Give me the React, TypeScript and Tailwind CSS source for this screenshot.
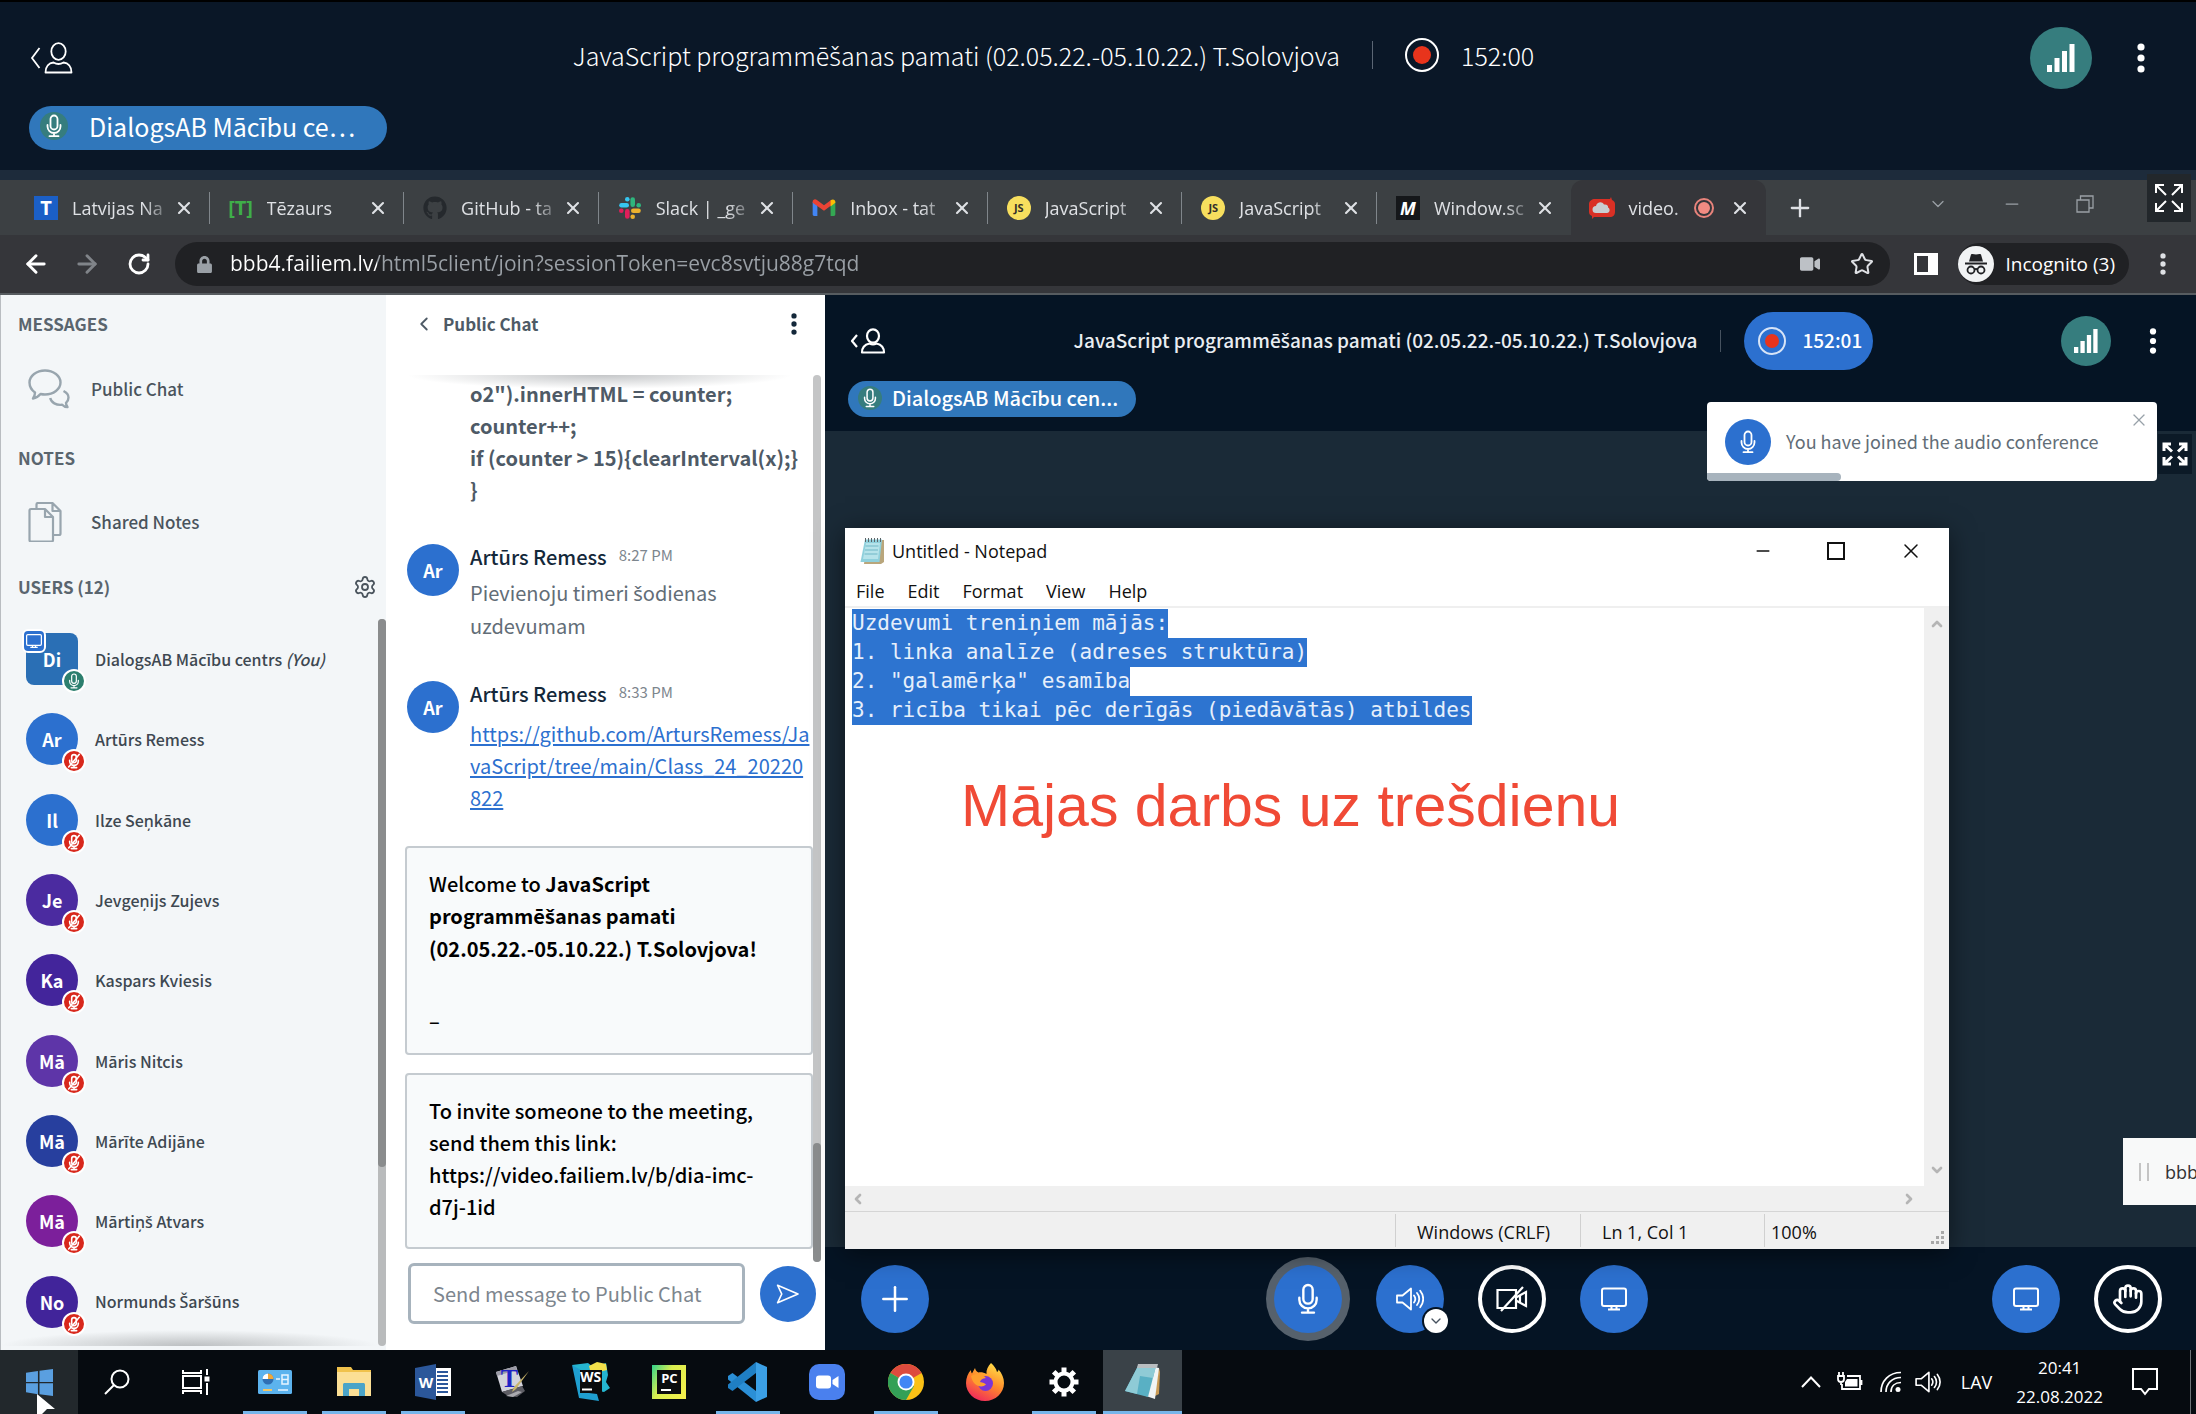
import React from "react";
import { ArrowLeft, ArrowRight, RotateCw, Star, X, Plus, Minus, ChevronLeft, ChevronDown, Hand, Settings } from "lucide-react";
import { FaGithub, FaLock, FaVideo } from "react-icons/fa";

type IconProps = { className?: string };

/* Letters with a caron come from Noto Sans, which carries them precomposed. */
const Text = ({ children }: { children: string }) => (
  <>
    {children.split(/([šŠ])/).map((part, i) =>
      i % 2 ? <span key={i} className="font-['Noto_Sans',sans-serif]">{part}</span> : part,
    )}
  </>
);

/* ---------- shared icons ---------- */

const UserToggleIcon = ({ className }: IconProps) => (
  <svg viewBox="0 0 42 32" className={className} fill="none" stroke="currentColor" strokeWidth="1.800">
    <path d="M9 6 1.500 16 9 26" />
    <ellipse cx="28" cy="9.500" rx="7.200" ry="8.300" />
    <path d="M15 30.500c0-6 3.500-9.500 8-10 3 1.800 7 1.800 10 0 4.500.500 8 4 8 10z" strokeLinejoin="round" />
  </svg>
);

const UserToggleBoldIcon = ({ className }: IconProps) => (
  <svg viewBox="0 0 36 26" className={className} fill="none" stroke="currentColor" strokeWidth="2.200" strokeLinejoin="round">
    <path d="M7 7 2 13l5 6" />
    <ellipse cx="23" cy="8" rx="6" ry="6.700" />
    <path d="M12 24.500c0-4.500 3-8 7.500-9 2 1 5 1 7 0 4.500 1 7.500 4.500 7.500 9z" />
  </svg>
);

const MicIcon = ({ className }: IconProps) => (
  <svg viewBox="0 0 24 24" className={className} fill="none" stroke="currentColor" strokeWidth="1.8" strokeLinecap="round">
    <rect x="8.500" y="1.500" width="7" height="14" rx="3.500" />
    <path d="M5.500 11v1.500a6.500 6.500 0 0 0 13 0V11M12 19v3M7.500 22.200h9" />
  </svg>
);

const MicOffIcon = ({ className }: IconProps) => (
  <svg viewBox="0 0 24 24" className={className} fill="none" stroke="currentColor" strokeWidth="2.400" strokeLinecap="round">
    <rect x="8.500" y="2.500" width="7" height="12" rx="3.500" />
    <path d="M5.500 11v1a6.500 6.500 0 0 0 13 0v-1M12 18.500V22M8 22h8M20 2 4 21" />
  </svg>
);

const SignalIcon = ({ className }: IconProps) => (
  <svg viewBox="0 0 28 28" className={className} fill="currentColor">
    <path d="M0 21h5v7H0zM7.500 14h5v14h-5zM15 7h5v21h-5zM22.500 0h5v28h-5z" />
  </svg>
);

const DotsIcon = ({ className }: IconProps) => (
  <svg viewBox="0 0 8 30" className={className} fill="currentColor">
    <circle cx="4" cy="4" r="3.600" />
    <circle cx="4" cy="15" r="3.600" />
    <circle cx="4" cy="26" r="3.600" />
  </svg>
);

const ExpandIcon = ({ className }: IconProps) => (
  <svg viewBox="0 0 28 28" className={className} fill="none" stroke="currentColor" strokeWidth="2">
    <path d="M1 9V1h8M19 1h8v8M27 19v8h-8M9 27H1v-8M1.500 1.500l9.500 9.500M26.500 1.500 17 11M26.500 26.500 17 17M1.500 26.500 11 17" />
  </svg>
);

const ExpandBoldIcon = ({ className }: IconProps) => (
  <svg viewBox="0 0 26 24" className={className} fill="none" stroke="currentColor" strokeWidth="3">
    <path d="M2 9V2h7M17 2h7v7M24 15v7h-7M9 22H2v-7M2.500 2.500l7.500 7M23.500 2.500 16 9.500M23.500 21.500 16 14.500M2.500 21.500l7.500-7" />
  </svg>
);

const ScreenIcon = ({ className }: IconProps) => (
  <svg viewBox="0 0 26 24" className={className} fill="none" stroke="currentColor" strokeWidth="2">
    <rect x="1" y="1.500" width="24" height="17.500" rx="2" />
    <path d="M9.500 22.500h7M7 22.500h12M10.500 19v3M15.500 19v3" />
  </svg>
);

const SpeakerIcon = ({ className }: IconProps) => (
  <svg viewBox="0 0 28 24" className={className} fill="none" stroke="currentColor" strokeWidth="1.800" strokeLinejoin="round">
    <path d="M1 8.500h5.500L15 1.500v21l-8.500-7H1z" />
    <path d="M18 8.500c1.500 2 1.500 5 0 7M21 6c3 3.500 3 8.500 0 12M24.200 3.800c4 5 4 11.500 0 16.400" strokeLinecap="round" />
  </svg>
);

const CameraOffIcon = ({ className }: IconProps) => (
  <svg viewBox="0 0 32 26" className={className} fill="none" stroke="currentColor" strokeWidth="2.200">
    <path d="M1.500 4H20v18H1.500zM20 11.500 30 6v14l-10-5.500M24 9v8M5 25 27 1" />
  </svg>
);

const ChatIcon = ({ className }: IconProps) => (
  <svg viewBox="0 0 42 40" className={className} fill="none" stroke="currentColor" strokeWidth="2.400" strokeLinejoin="round">
    <path d="M7 23.500C3.500 21 1.500 17.500 1.500 13.500 1.500 7 8.500 1.500 17 1.500s15.500 5.500 15.500 12S25.500 25.500 17 25.500c-1.500 0-3-.200-4.500-.500-2 2.500-4.500 4-7.500 4.500 1.500-2 2-4 2-6z" />
    <path d="M35.500 22c3 1.500 5 4 5 6.500 0 2-1 4-2.500 5.300 0 1.700.500 3 1.500 4.200-2 0-4-.800-5.300-2.300-6 .800-11-2.200-12-6.700" />
  </svg>
);

const NotesIcon = ({ className }: IconProps) => (
  <svg viewBox="0 0 34 40" className={className} fill="none" stroke="currentColor" strokeWidth="2.200" strokeLinejoin="round">
    <path d="M1.500 8.500c0-.800.500-1.500 1.500-1.500h14l8 8v23c0 .800-.500 1.500-1.500 1.500H3c-1 0-1.500-.700-1.500-1.500zM17 7v8h8" />
    <path d="M8.500 7V2.500c0-1 .500-1.500 1.500-1.500h14.500l8 8v22.500c0 1-.500 1.500-1.500 1.500h-6M24.500 1v8h8" />
  </svg>
);

const SendIcon = ({ className }: IconProps) => (
  <svg viewBox="0 0 28 24" className={className} fill="none" stroke="currentColor" strokeWidth="2" strokeLinejoin="round">
    <path d="M1.500 1.500 26 12 1.500 22.500 6.500 12z" />
  </svg>
);

const NotepadIcon = ({ className }: IconProps) => (
  <svg viewBox="0 0 28 28" className={className}>
    <path d="M9 3h17v22l-3 2H6z" fill="#b9a67c" />
    <path d="M7 2.500h17L21.500 25H2.500z" fill="#8fd0dc" />
    <path d="M8 6h14L20 22H5z" fill="#b6e3ea" />
    <path d="M7.500 1v4M10.500 1v4M13.500 1v4M16.500 1v4M19.500 1v4M22.500 1v4" stroke="#5b6468" strokeWidth="1" />
    <path d="M7.500 9h13M7 13h13M6.500 17h13" stroke="#6fb7c6" strokeWidth="1" />
  </svg>
);

/* ---------- tab favicons ---------- */

const SlackIcon = ({ className }: IconProps) => (
  <svg viewBox="0 0 24 24" className={className}>
    <g strokeWidth="4.600" strokeLinecap="round" fill="none">
      <path d="M3.500 9.300h5.200" stroke="#36c5f0" />
      <path d="M14.700 3.500v5.200" stroke="#2eb67d" />
      <path d="M15.300 14.700h5.200" stroke="#ecb22e" />
      <path d="M9.300 15.300v5.200" stroke="#e01e5a" />
    </g>
    <circle cx="9.300" cy="3.300" r="2.300" fill="#36c5f0" />
    <circle cx="20.700" cy="9.300" r="2.300" fill="#2eb67d" />
    <circle cx="14.700" cy="20.700" r="2.300" fill="#ecb22e" />
    <circle cx="3.300" cy="14.700" r="2.300" fill="#e01e5a" />
  </svg>
);

const GmailIcon = ({ className }: IconProps) => (
  <svg viewBox="0 0 24 18" className={className}>
    <path d="M0 3v13.500C0 17.300.700 18 1.500 18H5V7z" fill="#4285f4" />
    <path d="M24 3v13.500c0 .800-.700 1.500-1.500 1.500H19V7z" fill="#34a853" />
    <path d="M0 3c0-2.500 2.500-3.500 4.500-2L12 6.700 19.500 1v6L12 12.500 0 4z" fill="#ea4335" />
    <path d="M19 1.300C21.500-.500 24 .800 24 3v1l-5 4z" fill="#fbbc04" />
  </svg>
);

const CloudIcon = ({ className }: IconProps) => (
  <svg viewBox="0 0 26 22" className={className}>
    <path d="M6 2h15l1-2 1 3c2 1 3 2 3 4v8c0 3-2 5-5 5H5l-2 2v-3c-2-1-3-2-3-4V7c0-3 3-5 6-5z" fill="#d93025" />
    <path d="M7 16a3.500 3.500 0 0 1 0-7c1-4 6-5 8-1.500C18 7 19.500 9 19 10.500c2.500 1 2 5.500-1 5.500z" fill="#c9cdd0" />
  </svg>
);

const JsBadge = () => (
  <span className="flex size-6 items-center justify-center rounded-full bg-[#f7df5e] text-[11px] leading-none font-bold text-[#33302a]">JS</span>
);

type Tab = { icon: React.ReactNode; title: string; active?: boolean };

const tabs: Tab[] = [
  { icon: <span className="flex size-6 items-center justify-center bg-[#1b5fc6] text-xl leading-none font-bold text-white">T</span>, title: "Latvijas Na" },
  { icon: <span className="text-xl leading-none font-bold text-[#3fae49]">[T]</span>, title: "Tēzaurs" },
  { icon: <FaGithub className="size-6 text-[#25292d]" />, title: "GitHub - ta" },
  { icon: <SlackIcon className="size-6" />, title: "Slack | _ge" },
  { icon: <GmailIcon className="h-[17px] w-6" />, title: "Inbox - tat" },
  { icon: <JsBadge />, title: "JavaScript" },
  { icon: <JsBadge />, title: "JavaScript" },
  { icon: <span className="flex size-6 items-center justify-center bg-[#15171a] text-lg leading-none font-bold text-white italic">M</span>, title: "Window.sc" },
  { icon: <CloudIcon className="h-[22px] w-[26px]" />, title: "video.", active: true },
];

const BrowserTab = ({ tab, divider }: { tab: Tab; divider: boolean }) => (
  <div className={tab.active ? "relative flex h-full items-center rounded-t-xl bg-[#35363a] pr-4 pl-[17px]" : "relative flex h-full items-center pr-4 pl-[17px]"}>
    <span className="flex w-7 shrink-0 justify-center">{tab.icon}</span>
    <span className="ml-3 min-w-0 flex-1 mask-r-from-70% text-lg whitespace-nowrap text-[#dfe1e5]">{tab.title}</span>
    {tab.active && (
      <span className="mr-4 flex size-5 shrink-0 items-center justify-center rounded-full border-2 border-[#e8837b]">
        <span className="size-3 rounded-full bg-[#f28b82]" />
      </span>
    )}
    <button aria-label={`Close ${tab.title}`} className="shrink-0 text-[#dfe1e5]">
      <X className="size-5" strokeWidth={2.5} />
    </button>
    {divider && <span className="absolute top-3 right-0 h-8 w-px bg-[#80868b]" />}
  </div>
);

/* ---------- outer meeting bar ---------- */

const OuterHeader = () => (
  <header className="border-t-2 border-black bg-[#0a1727] text-white">
    <div className="flex h-[104px] items-center pt-2 pr-[51px] pl-[30px]">
      <button aria-label="Toggle users"><UserToggleIcon className="h-8 w-[43px]" /></button>
      <div className="flex flex-1 items-center justify-center pb-1.5 pl-1">
        <h1 className="text-[25px] leading-8 font-light"><Text>JavaScript programmēšanas pamati (02.05.22.-05.10.22.) T.Solovjova</Text></h1>
        <span className="mx-8 h-7 w-px bg-[#5b6674]" />
        <span className="flex size-[34px] items-center justify-center rounded-full border-2 border-white">
          <span className="size-[18px] rounded-full bg-[#e8341c]" />
        </span>
        <span className="ml-[22px] text-[25px] leading-8 font-light">152:00</span>
      </div>
      <button aria-label="Connection status" className="flex size-[62px] items-center justify-center rounded-full bg-[#367d7e]">
        <SignalIcon className="size-7" />
      </button>
      <button aria-label="Options" className="ml-[45px]"><DotsIcon className="h-[30px] w-2" /></button>
    </div>
    <div className="pb-5 pl-[29px]">
      <div className="flex h-11 w-[358px] items-center rounded-full bg-[#3077bb] pb-1 pl-[11px]">
        <span className="flex size-7 items-center justify-center rounded-full bg-[#367d7e]"><MicIcon className="size-6" /></span>
        <span className="ml-[21px] text-[25px] leading-8">DialogsAB Mācību ce…</span>
      </div>
    </div>
    <div className="h-2.5 bg-[#1d2b3b]" />
  </header>
);

/* ---------- browser chrome ---------- */

const BrowserChrome = () => (
  <div className="border-b-2 border-[#575c60] bg-[#35363a] font-['Open_Sans','Noto_Sans',sans-serif]">
    <div className="flex h-[55px] items-center bg-[#3c4043]">
      <div className="ml-[15px] grid h-full w-[1751px] grid-cols-9">
        {tabs.map((tab, i) => <BrowserTab key={i} tab={tab} divider={i < 7} />)}
      </div>
      <button aria-label="New tab" className="ml-5 text-[#dfe1e5]"><Plus className="size-7" strokeWidth={2} /></button>
      <div className="flex h-full flex-1 items-center justify-end gap-[54px] pr-[5px] pb-2 text-[#9aa0a6]">
        <button aria-label="Search tabs"><ChevronDown className="size-5" strokeWidth={1.5} /></button>
        <button aria-label="Minimize"><Minus className="size-5" strokeWidth={1.5} /></button>
        <button aria-label="Restore">
          <svg viewBox="0 0 18 18" className="size-[18px]" fill="none" stroke="currentColor" strokeWidth="1.300"><path d="M1 5h12v12H1zM4.500 5V1H17v12h-4" /></svg>
        </button>
        <button aria-label="Fullscreen" className="-mt-1.5 -ml-px flex h-12 w-11 items-center justify-center self-start bg-[#22272b] text-white"><ExpandIcon className="size-7" /></button>
      </div>
    </div>
    <div className="flex h-[58px] items-center pr-[30px] pl-[22px]">
      <button aria-label="Back" className="text-white"><ArrowLeft className="size-7" strokeWidth={2.5} /></button>
      <button aria-label="Forward" className="ml-[23px] text-[#808489]"><ArrowRight className="size-7" strokeWidth={2.5} /></button>
      <button aria-label="Reload" className="ml-[26px] text-white"><RotateCw className="size-6" strokeWidth={2.8} /></button>
      <div className="ml-6 flex h-[44px] flex-1 items-center rounded-full bg-[#202124] pr-4 pl-[21px]">
        <FaLock className="size-[17px] text-[#9aa0a6]" />
        <input
          aria-label="Address"
          readOnly
          value="bbb4.failiem.lv/html5client/join?sessionToken=evc8svtju88g7tqd"
          className="ml-[17px] min-w-0 flex-1 bg-[linear-gradient(90deg,#fff_147px,#9aa0a6_147px)] bg-clip-text text-[21px] text-transparent outline-none"
        />
        <FaVideo className="size-5 text-[#bdc1c6]" />
        <button aria-label="Bookmark" className="ml-[30px] text-[#dfe1e5]"><Star className="size-6" /></button>
      </div>
      <button aria-label="Side panel" className="ml-6 box-border h-[22px] w-6 border-[3px] border-r-[10px] border-white" />
      <button className="ml-5 flex h-[42px] items-center rounded-full bg-[#202124] pr-[14px] text-[19px] text-white">
        <svg viewBox="0 0 36 36" className="size-9">
          <circle cx="18" cy="18" r="18" fill="#f1f3f4" />
          <path d="M13 8.500c1.500-1 3 0 5 0s3.500-1 5 0l2 7H11z" fill="#202124" />
          <path d="M7 17.500h22" stroke="#202124" strokeWidth="2" />
          <g fill="none" stroke="#202124" strokeWidth="1.800"><circle cx="13" cy="24" r="3.500" /><circle cx="23" cy="24" r="3.500" /><path d="M16.500 23.500c1-.800 2-.800 3 0" /></g>
        </svg>
        <span className="ml-3">Incognito (3)</span>
      </button>
      <button aria-label="Menu" className="ml-[31px] text-[#dfe1e5]"><DotsIcon className="h-[22px] w-1.5" /></button>
    </div>
  </div>
);

/* ---------- users panel ---------- */

type User = { initials: string; name: string; bg: string; you?: boolean };

const users: User[] = [
  { initials: "Di", name: "DialogsAB Mācību centrs", bg: "bg-[#2a6fb5]", you: true },
  { initials: "Ar", name: "Artūrs Remess", bg: "bg-[#2c70cf]" },
  { initials: "Il", name: "Ilze Seņkāne", bg: "bg-[#2c70cf]" },
  { initials: "Je", name: "Jevgeņijs Zujevs", bg: "bg-[#4b2ba0]" },
  { initials: "Ka", name: "Kaspars Kviesis", bg: "bg-[#43259b]" },
  { initials: "Mā", name: "Māris Nitcis", bg: "bg-[#5e35a8]" },
  { initials: "Mā", name: "Mārīte Adijāne", bg: "bg-[#273f9e]" },
  { initials: "Mā", name: "Mārtiņš Atvars", bg: "bg-[#7c1f9b]" },
  { initials: "No", name: "Normunds Šaršūns", bg: "bg-[#41249a]" },
];

const UserRow = ({ user }: { user: User }) => (
  <li className="flex flex-1 items-center">
    <div className={`relative flex size-[52px] shrink-0 items-center justify-center text-lg font-bold text-white ${user.bg} ${user.you ? "rounded-lg" : "rounded-full"}`}>
      {user.initials}
      {user.you && (
        <span className="absolute -top-1 -left-1 flex size-6 items-center justify-center rounded-md border-2 border-white bg-[#2c70cf]"><ScreenIcon className="size-4" /></span>
      )}
      {user.you ? (
        <span className="absolute -right-2 -bottom-2 flex size-6 items-center justify-center rounded-full border-2 border-white bg-[#2c7f6e]"><MicIcon className="size-4" /></span>
      ) : (
        <span className="absolute -right-2 -bottom-2 flex size-6 items-center justify-center rounded-full border-2 border-white bg-[#d8281c]"><MicOffIcon className="size-4" /></span>
      )}
    </div>
    <span className="ml-[17px] text-base font-medium whitespace-nowrap text-[#3e4851]">
      <Text>{user.name}</Text>{user.you && <em> (You)</em>}
    </span>
  </li>
);

const SectionTitle = ({ children }: { children: React.ReactNode }) => (
  <h2 className="text-[17px] leading-8 font-bold text-[#5a656e]">{children}</h2>
);

const UsersPanel = () => (
  <aside className="flex w-[386px] shrink-0 flex-col border-l border-[#b9bdc1] bg-[#f3f6f8] pt-[13px]">
    <div className="px-[17px]">
      <SectionTitle>MESSAGES</SectionTitle>
      <button className="mt-6 flex h-16 w-full items-center pb-[15px] pl-[10px] text-[#4a545d]">
        <ChatIcon className="h-10 w-[42px] text-[#98a5ae]" />
        <span className="ml-[21px] text-[17px] font-medium">Public Chat</span>
      </button>
      <div className="mt-[14px]"><SectionTitle>NOTES</SectionTitle></div>
      <button className="mt-6 flex h-14 w-full items-center pb-[9px] pl-[10px] text-[#4a545d]">
        <NotesIcon className="h-10 w-[34px] text-[#98a5ae]" />
        <span className="ml-[29px] text-[17px] font-medium">Shared Notes</span>
      </button>
      <div className="mt-[17px] flex items-center justify-between">
        <SectionTitle>USERS (12)</SectionTitle>
        <button aria-label="Manage users" className="-mr-2 text-[#4a545d]"><Settings className="size-6" strokeWidth={1.8} /></button>
      </div>
    </div>
    <div className="mt-4 flex flex-1 pb-1">
      <ul className="flex flex-1 flex-col bg-[radial-gradient(ellipse_50%_16px_at_50%_100%,#bcbfc1,transparent)] pb-1 pl-[25px]">
        {users.map((u) => <UserRow key={u.name} user={u} />)}
      </ul>
      <div className="w-2 rounded-full bg-[#b9bbbc]"><div className="h-[548px] w-2 rounded-full bg-[#8a8c8d]" /></div>
    </div>
  </aside>
);

/* ---------- chat panel ---------- */

const ChatMessage = ({ time, children }: { time: string; children: React.ReactNode }) => (
  <div className="mb-9 ml-0.5 flex items-start">
    <span className="mt-[3px] flex size-[52px] shrink-0 items-center justify-center rounded-full bg-[#2c70cf] text-lg font-bold text-white">Ar</span>
    <div className="ml-[11px]">
      <p className="flex h-8 items-center">
        <span className="text-[20px] font-medium text-[#14283a]">Artūrs Remess</span>
        <time className="ml-3 pb-1 text-[15px] text-[#7d868e]">{time}</time>
      </p>
      {children}
    </div>
  </div>
);

const ChatPanel = () => (
  <section className="flex w-[439px] shrink-0 flex-col bg-white pb-[26px]">
    <div className="flex h-20 items-start justify-between pt-[13px] pr-7 pl-[27px]">
      <button className="flex h-8 items-center text-[#4e5a66]">
        <ChevronLeft className="size-[22px]" strokeWidth={2} />
        <span className="ml-2 text-[17px] font-bold">Public Chat</span>
      </button>
      <button aria-label="Chat options" className="mt-[5px] text-[#14283a]"><DotsIcon className="h-[22px] w-1.5" /></button>
    </div>
    <div className="flex flex-1 pr-1">
      <div className="flex flex-1 flex-col bg-[radial-gradient(ellipse_45%_14px_at_50%_0,#c4c6c8,transparent)] bg-no-repeat pl-[19px]">
        <p className="mb-[35px] pt-[3px] pl-[65px] text-[20px] leading-8 font-bold whitespace-nowrap text-[#4e5a66]">
          o2").innerHTML = counter;<br />counter++;<br />if (counter &gt; 15){"{"}clearInterval(x);{"}"}<br />{"}"}
        </p>
        <ChatMessage time="8:27 PM">
          <p className="pt-1 text-[20px] leading-8 text-[#626d77]"><Text>Pievienoju timeri šodienas</Text><br />uzdevumam</p>
        </ChatMessage>
        <ChatMessage time="8:33 PM">
          <a href="#class" className="block pt-2 text-[20px] leading-8 whitespace-nowrap text-[#2c70cf] underline underline-offset-2">
            https://github.com/ArtursRemess/Ja<br />vaScript/tree/main/Class_24_20220<br />822
          </a>
        </ChatMessage>
        <div className="-mt-1 h-[209px] rounded border-2 border-[#c5cbd0] bg-[#f8fafb] px-[22px] pt-5 text-[20px] leading-8 font-medium whitespace-nowrap text-black">
          Welcome to <b>JavaScript<br /><Text>programmēšanas pamati</Text><br />(02.05.22.-05.10.22.) T.Solovjova!</b>
          <p className="mt-10">–</p>
        </div>
        <div className="mt-[18px] h-[176px] rounded border-2 border-[#c5cbd0] bg-[#f8fafb] px-[22px] pt-5 text-[20px] leading-8 font-medium whitespace-nowrap text-black">
          To invite someone to the meeting,<br />send them this link:<br />https://video.failiem.lv/b/dia-imc-<br />d7j-1id
        </div>
      </div>
      <div className="-mb-3 flex w-2 flex-col justify-end rounded-full bg-[#c4c5c6]"><div className="h-[119px] w-2 rounded-full bg-[#8a8c8d]" /></div>
    </div>
    <form className="mt-[13px] flex items-center justify-between pr-[9px] pl-[22px]">
      <input aria-label="Message" placeholder="Send message to Public Chat" className="h-[61px] w-[337px] rounded-md border-3 border-[#a7b3bd] px-[22px] text-[20px] outline-none placeholder:text-[#7d868e]" />
      <button type="button" aria-label="Send message" className="flex size-14 items-center justify-center rounded-full bg-[#2c70cf] text-white"><SendIcon className="h-5 w-[26px]" /></button>
    </form>
  </section>
);

/* ---------- inner meeting ---------- */

const MeetingHeader = () => (
  <div className="relative h-[136px] bg-[#051424] text-white">
    <div className="flex h-[91px] items-center pr-[39px] pl-[25px]">
      <button aria-label="Toggle users"><UserToggleBoldIcon className="h-[26px] w-9" /></button>
      <div className="flex flex-1 items-center justify-center">
        <h2 className="text-[19px] leading-8 font-medium text-[#e9edf1]"><Text>JavaScript programmēšanas pamati (02.05.22.-05.10.22.) T.Solovjova</Text></h2>
        <span className="mx-[23px] h-[22px] w-px bg-[#46525f]" />
        <button className="flex h-[58px] w-[129px] items-center rounded-full bg-[#2c70cf] pl-[14px]">
          <span className="flex size-7 items-center justify-center rounded-full border-2 border-[#d7e4f7]"><span className="size-3.5 rounded-full bg-[#e8341c]" /></span>
          <span className="ml-4 text-[19px] font-medium">152:01</span>
        </button>
      </div>
      <button aria-label="Connection status" className="flex size-[50px] items-center justify-center rounded-full bg-[#367d7e]"><SignalIcon className="size-6" /></button>
      <button aria-label="Options" className="ml-[38px]"><DotsIcon className="h-[26px] w-2" /></button>
    </div>
    <div className="absolute top-[86px] left-[23px] flex h-9 w-[288px] items-center rounded-full bg-[#3077bb] pb-0.5 pl-[10px]">
      <span className="flex size-6 items-center justify-center rounded-full bg-[#367d7e]"><MicIcon className="size-5" /></span>
      <span className="ml-[10px] text-[20px] font-medium">DialogsAB Mācību cen...</span>
    </div>
    <div role="status" className="absolute top-[107px] right-[39px] z-20 flex h-[79px] w-[450px] items-center overflow-hidden rounded bg-white pl-[18px]">
      <span className="flex size-[46px] items-center justify-center rounded-full bg-[#2c70cf]"><MicIcon className="size-6" /></span>
      <span className="ml-[15px] text-[18px] text-[#626d77]">You have joined the audio conference</span>
      <button aria-label="Dismiss" className="absolute top-2 right-2 text-[#98a1a9]"><X className="size-5" strokeWidth={1.5} /></button>
      <span className="absolute bottom-0 left-0 h-2 w-[134px] rounded-r bg-[#a7b3bd]" />
    </div>
  </div>
);

const noteLines = [
  "Uzdevumi treniņiem mājās:",
  "1. linka analīze (adreses struktūra)",
  '2. "galamērķa" esamība',
  "3. ricība tikai pēc derīgās (piedāvātās) atbildes",
];

const Notepad = () => (
  <div className="relative z-10 mr-[247px] -mb-0.5 ml-5 flex flex-1 flex-col bg-white font-['Open_Sans','Noto_Sans',sans-serif] text-[#111] shadow-[0_4px_24px_rgba(0,0,0,0.5)]">
    <div className="flex h-[46px] items-center pr-[26px] pl-[13px]">
      <NotepadIcon className="size-7" />
      <span className="ml-1.5 flex-1 text-lg">Untitled - Notepad</span>
      <div className="flex items-center gap-[54px]">
        <button aria-label="Minimize"><Minus className="size-5" strokeWidth={1.8} /></button>
        <button aria-label="Maximize" className="size-[18px] border-2 border-[#111]" />
        <button aria-label="Close"><X className="size-6" strokeWidth={1.5} /></button>
      </div>
    </div>
    <div className="flex h-[34px] items-center gap-[23px] border-b-2 border-[#efefef] pt-0.5 pl-[11px] text-lg">
      {["File", "Edit", "Format", "View", "Help"].map((m) => <button key={m}>{m}</button>)}
    </div>
    <div className="flex flex-1">
      <div className="flex-1 pt-px pl-[7px]">
        <div role="textbox" aria-label="Text editor" aria-multiline="true" className="font-['DejaVu_Sans_Mono','Liberation_Mono',monospace] text-[21px] leading-[29px] text-[#e6effb]">
          {noteLines.map((l) => <p key={l}><span className="inline-block h-[29px] bg-[#2d74d0] whitespace-pre">{l}</span></p>)}
        </div>
        <p className="mt-[45px] pl-[109px] font-['Liberation_Sans',Arial,sans-serif] text-[59px] leading-[72px] text-[#f04a36]">Mājas darbs uz trešdienu</p>
      </div>
      <div className="flex w-[25px] flex-col items-center justify-between bg-[#f0f0f0] py-2 text-[#b5b5b5]">
        <ChevronDown className="size-4 rotate-180" strokeWidth={4} />
        <ChevronDown className="size-4" strokeWidth={4} />
      </div>
    </div>
    <div className="flex h-[26px] items-center justify-between border-b border-[#d5d5d5] bg-[#f0f0f0] pr-8 pl-[5px] text-[#b5b5b5]">
      <ChevronDown className="size-4 rotate-90" strokeWidth={4} />
      <ChevronDown className="size-4 -rotate-90" strokeWidth={4} />
    </div>
    <div className="relative flex h-[37px] justify-end bg-[#f0f0f0] py-0.5 text-lg leading-9">
      <span className="w-[185px] border-l border-[#d0d0d0] pl-[21px]">Windows (CRLF)</span>
      <span className="w-[184px] border-l border-[#d0d0d0] pl-[21px]">Ln 1, Col 1</span>
      <span className="w-[185px] border-l border-[#d0d0d0] pl-1.5">100%</span>
      <svg viewBox="0 0 14 14" className="absolute right-1 bottom-1 size-3.5" fill="#a8a8a8"><path d="M10 0h3v3h-3zM10 5h3v3h-3zM5 5h3v3H5zM10 10h3v3h-3zM5 10h3v3H5zM0 10h3v3H0z" /></svg>
    </div>
  </div>
);

const ActionButton = ({ label, outline, children }: { label: string; outline?: boolean; children: React.ReactNode }) => (
  <button aria-label={label} className={outline ? "relative flex size-[68px] items-center justify-center rounded-full border-4 border-white" : "relative flex size-[68px] items-center justify-center rounded-full bg-[#2c70cf]"}>
    {children}
  </button>
);

const ActionsBar = () => (
  <div className="flex h-[103px] items-center justify-between bg-[#051424] pr-[34px] pl-9 text-white">
    <ActionButton label="Actions"><Plus className="size-10" strokeWidth={1.5} /></ActionButton>
    <div className="flex items-center gap-[34px]">
      <span className="-mx-2 flex size-[84px] items-center justify-center rounded-full bg-[#56616c]">
        <ActionButton label="Mute"><MicIcon className="size-8" /></ActionButton>
      </span>
      <ActionButton label="Leave audio">
        <SpeakerIcon className="h-6 w-7" />
        <span className="absolute -right-1 bottom-0 flex size-6 items-center justify-center rounded-full bg-white text-[#46525f] ring-2 ring-[#051424]"><ChevronDown className="size-4" /></span>
      </ActionButton>
      <ActionButton label="Share webcam" outline><CameraOffIcon className="h-[26px] w-8" /></ActionButton>
      <ActionButton label="Share screen"><ScreenIcon className="h-6 w-[26px]" /></ActionButton>
    </div>
    <div className="flex items-center gap-[34px]">
      <ActionButton label="Restore presentation"><ScreenIcon className="h-6 w-[26px]" /></ActionButton>
      <ActionButton label="Raise hand" outline><Hand className="size-8" strokeWidth={2} /></ActionButton>
    </div>
  </div>
);

const Meeting = () => (
  <section className="relative flex min-w-0 flex-1 flex-col">
    <MeetingHeader />
    <div className="relative flex flex-1 flex-col bg-[#1a2a37] pt-[97px]">
      <button aria-label="Fullscreen" className="absolute top-[3px] right-1 flex h-10 w-[34px] items-center justify-center bg-[#0c1a27] text-white"><ExpandBoldIcon className="h-6 w-[26px]" /></button>
      <Notepad />
      <div className="absolute right-0 bottom-[42px] flex h-[67px] w-[73px] items-center bg-[#f8f9f9] pl-4 font-['Open_Sans','Noto_Sans',sans-serif] text-lg text-[#333]">
        <span className="h-[18px] w-2.5 shrink-0 border-x-2 border-[#c4c4c4]" />
        <span className="ml-4">bbb</span>
      </div>
    </div>
    <ActionsBar />
  </section>
);

/* ---------- taskbar ---------- */

const WordIcon = () => (
  <span className="relative flex h-9 w-9 items-center">
    <svg viewBox="0 0 36 36" className="absolute inset-0 size-full"><path d="M20 4h16v28H20z" fill="#fff" /><path d="M22 8h11M22 12h11M22 16h11M22 20h11M22 24h11M22 28h11" stroke="#2b579a" strokeWidth="1.800" /><path d="M0 4 21 0v36L0 32z" fill="#2b579a" /></svg>
    <span className="relative pl-1 text-[15px] leading-none font-bold text-white">W</span>
  </span>
);

const TypeIcon = () => (
  <span className="relative flex h-[34px] w-9 items-center">
    <svg viewBox="0 0 36 34" className="absolute inset-0 size-full"><path d="M2 7 22 1l7 20L8 27z" fill="#d3d3db" /><path d="M2 7 22 1l1 4L3 11z" fill="#9b9ba6" /><path d="M8 27 28 21l3 5-8 6-9-1z" fill="#5d5d64" /><path d="M12 31 24 26l4 1-9 5z" fill="#a9a9ae" /><path d="M35 6 22 24l-4 3 2-5z" fill="#c8b46a" /></svg>
    <span className="relative -mt-1.5 pl-[7px] font-['Liberation_Serif',serif] text-[26px] leading-none font-bold text-[#1f22c4]">T</span>
  </span>
);

const WebStormIcon = () => (
  <span className="relative flex h-10 w-10 items-center justify-center">
    <svg viewBox="0 0 40 40" className="absolute inset-0 size-full">
      <path d="m1 3 16-2 5 4 13-4 2 12-2 7 4 6-6 4-5-1z" fill="#25b5cf" />
      <path d="m18 4 8-4 9 2 1 6-16 4z" fill="#f3e04a" />
      <path d="m1 3 9 5v22l16 2 2 7-20-3z" fill="#1f9fd0" />
      <path d="M9 8h22v23H9z" fill="#0b0c0e" />
      <path d="M11 27.500h10" stroke="#fff" strokeWidth="2" />
    </svg>
    <span className="relative -mt-2.5 text-[14px] leading-none font-bold text-white">WS</span>
  </span>
);

const PyCharmIcon = () => (
  <span className="relative flex size-[34px] items-center justify-center bg-[linear-gradient(120deg,#2fd28b,#d9ee4f_40%,#f6ef4b)]">
    <span className="flex size-6 flex-col items-center bg-[#0b0c0e] pt-0.5 text-[13px] leading-none font-bold text-white">PC<span className="mt-1 ml-1 h-0.5 w-2.5 self-start bg-white" /></span>
  </span>
);

const VsCodeIcon = () => (
  <svg viewBox="0 0 40 40" className="size-10">
    <path d="M0 14 4.500 11 28 29v11L0 17.500z" fill="#2b8fd6" />
    <path d="M28 0v11L4.500 29 0 26v-3.500z" fill="#1f7fc4" />
    <path d="m28 0 11 5v30l-11 5z" fill="#3ba0e6" />
  </svg>
);

const ChromeIcon = () => (
  <svg viewBox="0 0 36 36" className="size-9">
    <circle cx="18" cy="18" r="18" fill="#fbc116" />
    <path d="M18 18 2.400 9A18 18 0 0 1 33.600 9z" fill="#dd4b3e" />
    <path d="M2.400 9A18 18 0 0 0 18 36l8-14-8-4z" fill="#33a057" />
    <circle cx="18" cy="18" r="8.500" fill="#fff" />
    <circle cx="18" cy="18" r="6.600" fill="#4286f5" />
  </svg>
);

const FirefoxIcon = () => (
  <svg viewBox="0 0 38 38" className="size-[38px]">
    <defs>
      <linearGradient id="fx" x1="0.800" y1="0" x2="0.300" y2="1"><stop offset="0" stopColor="#ffe44a" /><stop offset=".5" stopColor="#ff8a2b" /><stop offset="1" stopColor="#f0285c" /></linearGradient>
    </defs>
    <path d="M25 0c3 3 5 5 6 9 1-.500 1.500-1.500 1.500-2.500C36 10.500 38 15 38 20c0 10-8.500 18-19 18S0 30 0 20c0-5 2-10 5-13 0 1.500.200 2.500 1 3.500L9 5c.500 2 1.500 3.500 3.500 4.500C15 9 18 9.500 20.500 11 20 7 22 3 25 0z" fill="url(#fx)" />
    <circle cx="19.500" cy="20.500" r="7.500" fill="#7a35d8" />
    <path d="M5 13c4-3 11-3 15 2-3.500.500-5.500 1.500-6 4 3 .500 5 1.500 6 2.500-4 4-13 2-15-8.500z" fill="#ff9f2e" />
  </svg>
);

const GearIcon = () => (
  <svg viewBox="0 0 30 30" className="size-[30px]" fill="none" stroke="#fff">
    <circle cx="15" cy="15" r="8.500" strokeWidth="4" />
    <path d="M15 0.500v5M15 24.500v5M.500 15h5M24.500 15h5M4.700 4.700l3.600 3.600M21.700 21.700l3.600 3.600M4.700 25.300l3.600-3.600M21.700 8.300l3.600-3.600" strokeWidth="5" />
  </svg>
);

type Task = { label: string; icon: React.ReactNode; open?: boolean; active?: boolean };

const tasks: Task[] = [
  { label: "Search", icon: <svg viewBox="0 0 26 26" className="size-[26px]" fill="none" stroke="#fff" strokeWidth="2"><circle cx="16" cy="10" r="8.500" /><path d="M10 16 1 25" /></svg> },
  { label: "Task view", icon: <svg viewBox="0 0 28 26" className="h-[26px] w-7" fill="none" stroke="#fff" strokeWidth="2"><path d="M1 7h18v12H1zM1 1v3h18V1M1 25v-3h18v3M25 0v6M25 14v12" /><path d="M22.500 7.500h5v5h-5z" fill="#fff" stroke="none" /></svg> },
  { label: "Control panel", open: true, icon: <svg viewBox="0 0 34 24" className="h-6 w-[34px]"><rect width="34" height="24" rx="1.500" fill="#5cb3ee" /><circle cx="10" cy="9" r="5.500" fill="#2f6fb4" /><path d="M10 9V3.500A5.500 5.500 0 0 0 4.500 9z" fill="#fff" /><path d="M10 9h5.500A5.500 5.500 0 0 0 10 3.500z" fill="#f0a83a" /><path d="M18 9h4M24 5h6v9h-6zM24 9.500h6M20 20h10" stroke="#e8f5ff" strokeWidth="1.500" fill="none" /><path d="M5 20h9" stroke="#f3c766" strokeWidth="2" /></svg> },
  { label: "File Explorer", open: true, icon: <svg viewBox="0 0 36 30" className="h-[30px] w-9"><path d="M1 0h14l2 3h18v26H1z" fill="#f0c24c" /><path d="M1 5h34v24H1z" fill="#fbdf95" /><path d="M7 29V18c0-1.500.500-2 2-2h18c1.500 0 2 .500 2 2v11h-6v-7H13v7z" fill="#4ba4c8" /></svg> },
  { label: "Word", open: true, icon: <WordIcon /> },
  { label: "Type editor", icon: <TypeIcon /> },
  { label: "WebStorm", icon: <WebStormIcon /> },
  { label: "PyCharm", icon: <PyCharmIcon /> },
  { label: "Visual Studio Code", open: true, icon: <VsCodeIcon /> },
  { label: "Zoom", icon: <svg viewBox="0 0 36 36" className="size-9"><rect width="36" height="36" rx="10" fill="#4a80ee" /><rect x="7" y="11.500" width="15" height="13" rx="3" fill="#fff" /><path d="m23.500 16 6-4v12l-6-4z" fill="#fff" /></svg> },
  { label: "Chrome", open: true, icon: <ChromeIcon /> },
  { label: "Firefox", icon: <FirefoxIcon /> },
  { label: "Settings", open: true, icon: <GearIcon /> },
  { label: "Notepad", active: true, icon: <svg viewBox="0 0 36 36" className="size-9"><path d="M30 4h4l1 4-1 22-4 2z" fill="#c99a55" /><path d="m29 3 5 1-4 31-9-3z" fill="#f1f4f5" /><path d="M13 2h18l-8 31L0 27z" fill="#59b0c4" /><path d="M13 2h18l-3 12-13-2 -3 18L0 27z" fill="#8fcbd6" /><path d="M13 0h20l-1 4H12z" fill="#b8bdc0" /></svg> },
];

const Taskbar = () => (
  <footer className="relative flex h-16 bg-[#060b10] font-['Open_Sans','Noto_Sans',sans-serif] text-white">
    <button aria-label="Start" className="flex w-[78px] shrink-0 items-center justify-center bg-[#22282c]">
      <svg viewBox="0 0 26 26" className="size-[27px]" fill="#5a9fe0"><path d="M0 3.500 11.500 2v10.500H0zM13 1.800 26 0v12.500H13zM0 13.800h11.500v10.500L0 22.500zM13 13.800h13V26l-13-1.700z" /></svg>
    </button>
    <div className="grid w-[1104px] grid-cols-14">
      {tasks.map((t) => (
        <button key={t.label} aria-label={t.label} className={t.active ? "relative flex items-center justify-center bg-[#3a4248]" : "relative flex items-center justify-center"}>
          {t.icon}
          {t.open && <span className="absolute bottom-0 h-[3px] w-16 bg-[#76b5ea]" />}
          {t.active && <span className="absolute inset-x-0 bottom-0 h-[3px] bg-[#76b5ea]" />}
        </button>
      ))}
    </div>
    <div className="ml-auto flex items-center">
      <svg viewBox="0 0 20 12" className="h-3 w-5" fill="none" stroke="#fff" strokeWidth="2"><path d="M1 11 10 1.500 19 11" /></svg>
      <svg viewBox="0 0 26 20" className="ml-4 h-5 w-[26px]" fill="none" stroke="#fff" strokeWidth="1.800"><path d="M10 4h13v13H5v-5M24.500 8v5M2 0v4M6 0v4M1 4h6v3c0 2-1 3-3 3s-3-1-3-3zM4 10v3" /><path d="M10 7h10.500v7.500H8V10z" fill="#fff" stroke="none" /></svg>
      <svg viewBox="0 0 22 22" className="ml-[17px] size-[22px]" fill="none" stroke="#fff" strokeWidth="1.700"><path d="M1 21C1 10 9 1.500 21 1.500M6 21C6 12.500 12 6.500 21 6.500M11 21c0-6 4-9.500 10-9.500" /><circle cx="18" cy="18.500" r="2.500" fill="#fff" stroke="none" /></svg>
      <SpeakerIcon className="ml-[13px] h-[22px] w-[26px]" />
      <span className="ml-5 text-lg">LAV</span>
      <time className="ml-6 text-center text-[17px] leading-[29px]">20:41<br />22.08.2022</time>
      <svg viewBox="0 0 26 28" className="ml-[29px] h-7 w-[26px]" fill="none" stroke="#fff" strokeWidth="2"><path d="M1 1h24v20h-8l-4 5-4-5H1z" /></svg>
      <span className="mr-[5px] ml-8 h-16 w-px bg-[#6d7276]" />
    </div>
    <svg viewBox="0 0 18 20" className="absolute bottom-0 left-[37px] h-5 w-[18px]" fill="#fff"><path d="M0 0 18 15h-8l-5 5H0z" /></svg>
  </footer>
);

export default function App() {
  return (
    <div className="flex min-h-screen flex-col bg-black font-['Noto_Sans_CJK_SC','Noto_Sans',sans-serif]">
      <OuterHeader />
      <BrowserChrome />
      <main className="flex flex-1">
        <UsersPanel />
        <ChatPanel />
        <Meeting />
      </main>
      <Taskbar />
    </div>
  );
}
